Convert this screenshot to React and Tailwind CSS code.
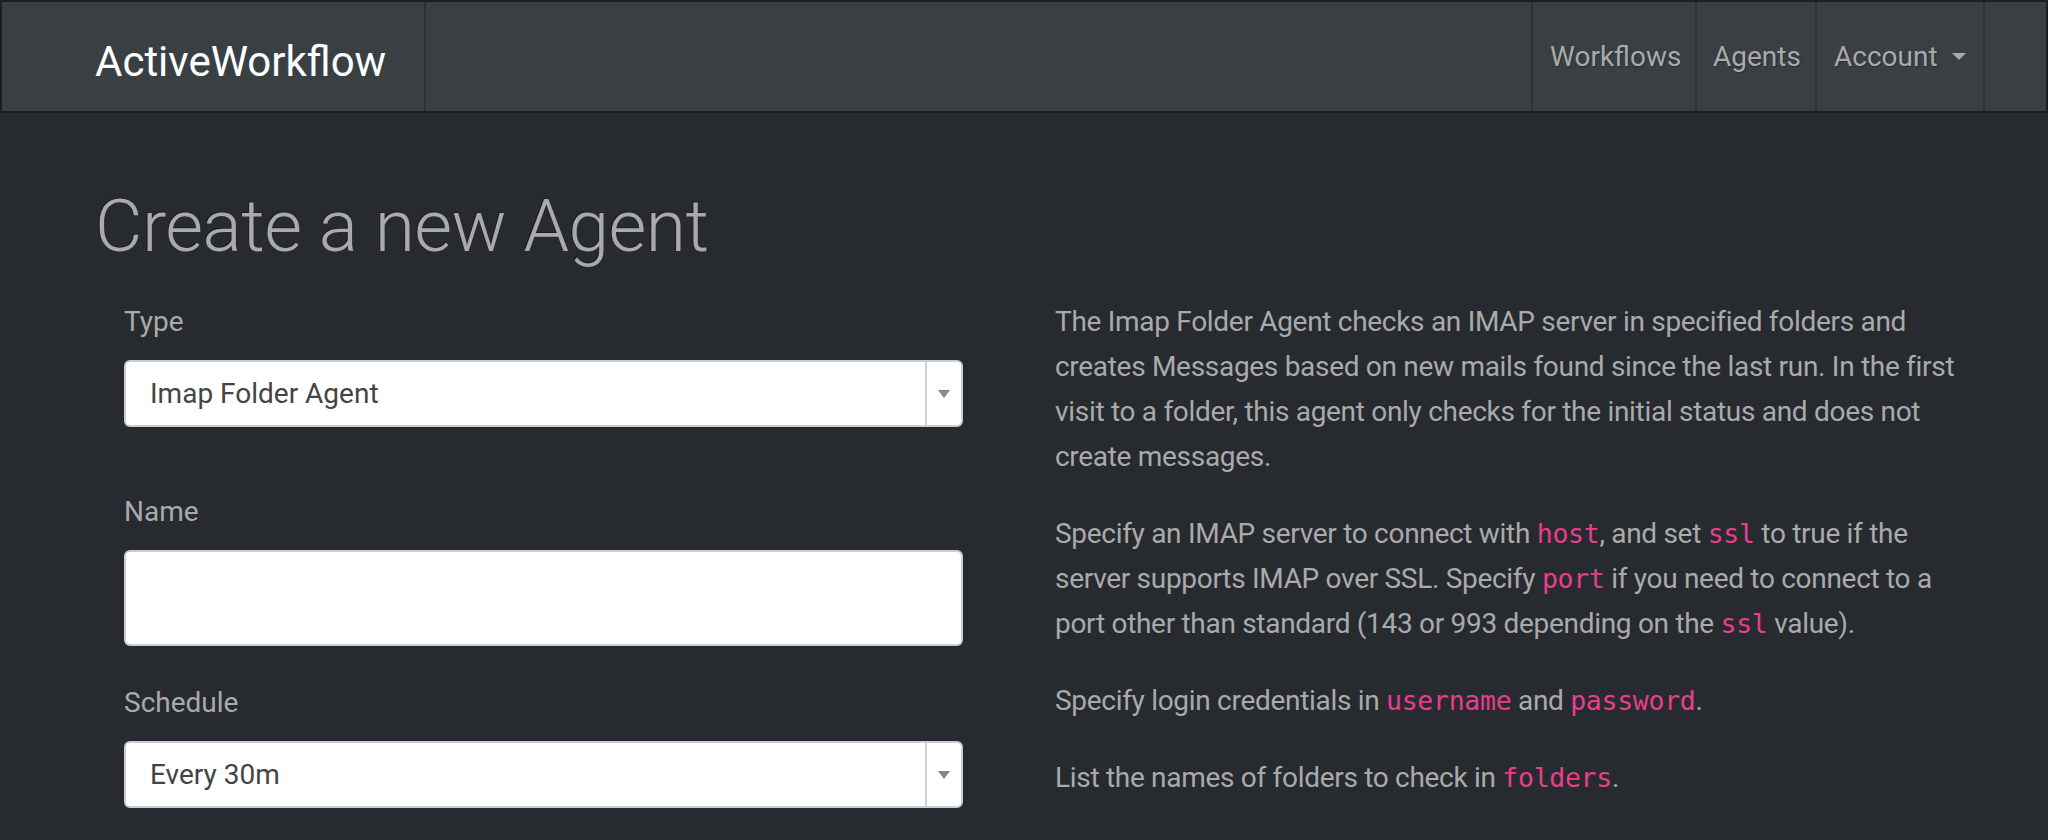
import React from "react";

function Code({ children }) {
  return (
    <code className="font-['DejaVu_Sans_Mono',monospace] text-[26.5px] text-[#e83e8c]">
      {children}
    </code>
  );
}

function Select({ value }) {
  return (
    <div className="flex h-[67px] items-stretch rounded-[6px] border-2 border-[#c9ccd0] bg-white">
      <div className="flex flex-1 items-center pl-[24px] text-[28px] text-[#444]">
        {value}
      </div>
      <div className="flex w-[36px] items-center justify-center border-l-2 border-[#d0d0d0]">
        <span className="h-0 w-0 border-x-[6px] border-t-[8px] border-x-transparent border-t-[#888]" />
      </div>
    </div>
  );
}

export default function App() {
  const navItems = [
    { label: "Workflows", width: "w-[164px]", pad: "pl-[17px]" },
    { label: "Agents", width: "w-[120px]", pad: "pl-[16px]" },
  ];

  return (
    <div className="min-h-screen bg-[#272b30] font-['Roboto',sans-serif] text-[#aaa]">
      {/* Navbar */}
      <nav className="flex h-[113px] border-2 border-[#1c1e22] bg-[#3a3f44]">
        <div className="flex w-[424px] items-center border-r-2 border-[#2e3237] pl-[93px] pt-[10px]">
          <span className="text-[42px] font-normal text-white">ActiveWorkflow</span>
        </div>
        <div className="flex-1" />
        <ul className="flex">
          {navItems.map((item) => (
            <li
              key={item.label}
              className={`flex items-center border-l-2 border-[#2e3237] text-[28px] text-[#aaa] [text-shadow:1px_1px_1px_rgba(0,0,0,0.3)] ${item.width} ${item.pad}`}
            >
              {item.label}
            </li>
          ))}
          <li className="flex w-[170px] items-center border-x-2 border-[#2e3237] pl-[17px] text-[28px] text-[#aaa] [text-shadow:1px_1px_1px_rgba(0,0,0,0.3)]">
            Account
            <span className="ml-[14px] h-0 w-0 border-x-[7px] border-t-[7px] border-x-transparent border-t-[#aaa]" />
          </li>
        </ul>
        <div className="w-[61px]" />
      </nav>

      {/* Content */}
      <main className="pl-[95px] pt-[68px]">
        <h1 className="text-[73px] font-light leading-[90px] tracking-[-0.5px] text-[#aaa] [text-shadow:-1px_-1px_0_rgba(0,0,0,0.3)]">
          Create a new Agent
        </h1>

        <div className="mt-[28px] flex">
          {/* Form */}
          <div className="w-[960px] shrink-0 pl-[29px] pr-[92px]">
            <label className="block text-[28px] leading-[45px]">Type</label>
            <div className="mt-[16px]">
              <Select value="Imap Folder Agent" />
            </div>

            <label className="mt-[62px] block text-[28px] leading-[45px]">Name</label>
            <input
              type="text"
              className="mt-[16px] block h-[96px] w-full rounded-[6px] border-2 border-[#c9ccd0] bg-white px-[24px] text-[28px] text-[#444] outline-none"
            />

            <label className="mt-[34px] block text-[28px] leading-[45px]">Schedule</label>
            <div className="mt-[16px]">
              <Select value="Every 30m" />
            </div>
          </div>

          {/* Description */}
          <div className="w-[904px] text-[28px] leading-[45px] tracking-[-0.3px]">
            <p className="mb-[32px]">
              The Imap Folder Agent checks an IMAP server in specified folders and
              creates Messages based on new mails found since the last run. In the first
              visit to a folder, this agent only checks for the initial status and does not
              create messages.
            </p>
            <p className="mb-[32px]">
              Specify an IMAP server to connect with <Code>host</Code>, and set{" "}
              <Code>ssl</Code> to true if the server supports IMAP over SSL. Specify{" "}
              <Code>port</Code> if you need to connect to a port other than standard (143
              or 993 depending on the <Code>ssl</Code> value).
            </p>
            <p className="mb-[32px]">
              Specify login credentials in <Code>username</Code> and{" "}
              <Code>password</Code>.
            </p>
            <p className="mb-[32px]">
              List the names of folders to check in <Code>folders</Code>.
            </p>
          </div>
        </div>
      </main>
    </div>
  );
}
